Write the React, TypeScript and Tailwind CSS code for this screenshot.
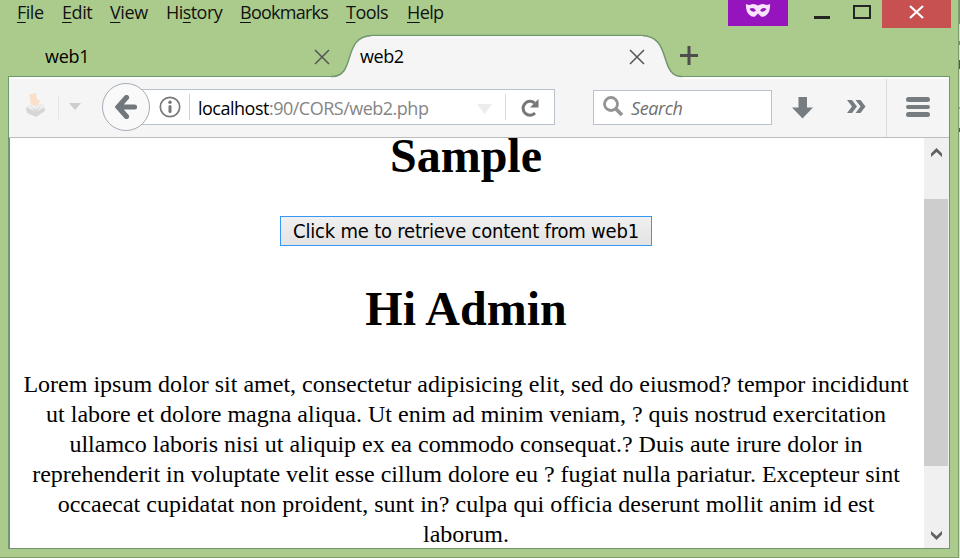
import React from "react";

const menuItems = [
  { pre: "", key: "F", post: "ile", box: "w-[45px] tracking-[-0.5px]" },
  { pre: "", key: "E", post: "dit", box: "w-[48px] tracking-[-0.4px]" },
  { pre: "", key: "V", post: "iew", box: "w-[56px] tracking-[-0.4px]" },
  { pre: "Hi", key: "s", post: "tory", box: "w-[74px] tracking-[-0.55px]" },
  { pre: "", key: "B", post: "ookmarks", box: "w-[106px] tracking-[-0.75px]" },
  { pre: "", key: "T", post: "ools", box: "w-[61px] tracking-[-0.5px]" },
  { pre: "", key: "H", post: "elp", box: "w-[60px] tracking-[-0.6px]" },
];

const paragraph = [
  "Lorem ipsum dolor sit amet, consectetur adipisicing elit, sed do eiusmod? tempor incididunt",
  "ut labore et dolore magna aliqua. Ut enim ad minim veniam, ? quis nostrud exercitation",
  "ullamco laboris nisi ut aliquip ex ea commodo consequat.? Duis aute irure dolor in",
  "reprehenderit in voluptate velit esse cillum dolore eu ? fugiat nulla pariatur. Excepteur sint",
  "occaecat cupidatat non proident, sunt in? culpa qui officia deserunt mollit anim id est",
  "laborum.",
];

function CloseX({ className }: { className: string }) {
  return (
    <svg className={className} width="16" height="16" viewBox="0 0 16 16">
      <path d="M1 1L15 15M15 1L1 15" stroke="#555" strokeWidth="1.5" fill="none" />
    </svg>
  );
}

function MenuBar() {
  return (
    <div className="flex h-[34px] items-start pl-[17px]">
      <nav className="flex h-7 text-[18px] leading-[24px] text-[#111]">
        {menuItems.map((m) => (
          <span key={m.key} className={m.box}>
            {m.pre}
            <span className="underline decoration-1 underline-offset-[3px]">{m.key}</span>
            {m.post}
          </span>
        ))}
      </nav>
      <div className="ml-auto flex">
        <div className="flex h-[26px] w-[60px] justify-center bg-[#9614bd] pt-[3px]">
          <svg width="26" height="15" viewBox="0 0 26 15">
            <path
              fillRule="evenodd"
              fill="#f7e3fb"
              d="M1 1Q4 2.500 6 1.500Q9 0 13 2.500Q17 0 20 1.500Q22 2.500 25 1Q25.500 8 22 11.500Q19 14.500 16 13.500L13 10.500L10 13.500Q7 14.500 4 11.500Q.5 8 1 1ZM4.500 6Q8 3.500 11 7.500Q7.500 10.500 4.500 6ZM21.500 6Q18 3.500 15 7.500Q18.500 10.500 21.500 6Z"
            />
          </svg>
        </div>
        <div className="mt-4 ml-[26px] h-[3px] w-4 bg-[#252525]" />
        <div className="mt-[5px] ml-[23px] h-[14px] w-[18px] border-2 border-[#252525]" />
        <div className="ml-[11px] flex h-7 w-[69px] justify-center bg-[#c75050] pt-[5px]">
          <svg width="15" height="14" viewBox="0 0 15 14">
            <path d="M1 1L14 13M14 1L1 13" stroke="#fff" strokeWidth="2.200" />
          </svg>
        </div>
        <div className="w-[7px]" />
      </div>
    </div>
  );
}

function TabStrip() {
  return (
    <div className="relative z-10 flex h-[42px] pl-[45px] text-[18px] text-black">
      <div className="flex w-[286px] pt-[10px]">
        <span className="w-[269px] leading-6 tracking-[-0.3px]">web1</span>
        <CloseX className="mt-[5px] shrink-0" />
      </div>
      <div className="relative h-[46px] w-[352px] shrink-0">
        <svg className="absolute top-0 left-0" width="352" height="46" viewBox="0 0 352 46">
          <path d="M0 46V43H1C26 43 10 1.500 42 1.500H310C342 1.500 327 43 351 43H352V46Z" fill="#f5f5f5" />
          <path d="M0 42.500H1C26 42.500 10 1.500 42 1.500H310C342 1.500 327 42.500 351 42.500" fill="none" stroke="#72966f" strokeWidth="1.500" />
          <path d="M40 2.800H312" stroke="#fff" strokeWidth="1" />
        </svg>
        <div className="relative flex pt-[10px] pl-[29px]">
          <span className="w-[269px] leading-6 tracking-[-0.4px]">web2</span>
          <CloseX className="mt-[5px] shrink-0" />
        </div>
      </div>
      <svg className="mt-[12px] ml-[-3px]" width="18" height="19" viewBox="0 0 18 19">
        <path d="M0 9.500H18M9 0V19" stroke="#4d4d4d" strokeWidth="3" />
      </svg>
    </div>
  );
}

function Toolbar() {
  return (
    <div className="flex h-[61px] border-b border-[#bcbcbc] bg-[#f5f5f5] shadow-[inset_0_2px_0_#fcfcfc]">
      <svg className="mt-[16px] ml-[16px]" width="22" height="26" viewBox="0 0 22 26">
        <path d="M1 15L7 10L19 12L20 18L11 24L2 20Z" fill="#d6d6d6" />
        <path d="M1 14L7 10L19 12L20 14L11 19Z" fill="#eee" />
        <path d="M6 14L11 17L16 13L11 19Z" fill="#d0d0d0" />
        <path d="M4 1.500L11 0L12 7L15.500 7L11.500 14L4 9L6 8Z" fill="#fadfc9" />
      </svg>
      <div className="mt-[18px] ml-[11px] h-6 w-px bg-[#e5e5e5]" />
      <svg className="mt-[26px] ml-[10px]" width="12" height="7">
        <path d="M0 0H12L6 7Z" fill="#cdcdcd" />
      </svg>
      <div className="z-10 mt-[6px] ml-[21px] flex h-12 w-12 shrink-0 items-center justify-center rounded-full border border-[#a4adb7] bg-[#f9f9f9]">
        <svg width="22" height="24" viewBox="0 0 22 24">
          <path d="M11.500 2.500L3 12L11.500 21.500M4 12H19.500" fill="none" stroke="#72777b" strokeWidth="5.200" strokeLinejoin="miter" strokeLinecap="round" />
        </svg>
      </div>
      <div className="mt-[12px] ml-[-10px] flex h-9 w-[415px] shrink-0 border border-[#b9c1ce] bg-white">
        <svg className="mt-[6px] ml-[18px]" width="22" height="22" viewBox="0 0 22 22">
          <circle cx="11" cy="11" r="9.700" fill="none" stroke="#7a7a7a" strokeWidth="1.700" />
          <circle cx="11" cy="6.200" r="1.700" fill="#777" />
          <path d="M11 10.500V15.500" stroke="#777" strokeWidth="3" strokeLinecap="round" />
        </svg>
        <div className="mt-[4px] ml-[8px] h-[26px] w-px bg-[#d2d2d2]" />
        <div className="mt-[6px] ml-[8px] w-[279px] text-[18px] leading-6 tracking-[-0.5px] text-[#858585]">
          <span className="text-black">localhost</span>:90/CORS/web2.php
        </div>
        <svg className="mt-[14px] shrink-0" width="15" height="10">
          <path d="M0 0H15L7.500 10Z" fill="#ececec" />
        </svg>
        <div className="mt-[4px] ml-[13px] h-[26px] w-px shrink-0 bg-[#d8dce2]" />
        <svg className="mt-[8px] ml-[15px] shrink-0" width="19" height="20" viewBox="0 0 19 20">
          <path d="M14 15A6.900 6.900 0 1 1 13.500 5" fill="none" stroke="#777" strokeWidth="3" />
          <path d="M17.500 1V9.500H9Z" fill="#777" />
        </svg>
      </div>
      <div className="mt-[13px] ml-[38px] flex h-[35px] w-[179px] shrink-0 border border-[#b9c1ce] bg-white">
        <svg className="mt-[5px] ml-[9px]" width="21" height="22" viewBox="0 0 21 22">
          <circle cx="8" cy="8" r="6.500" fill="none" stroke="#949494" strokeWidth="2.800" />
          <path d="M12.500 12.500L19 19" stroke="#949494" strokeWidth="3.800" />
        </svg>
        <span className="mt-[5px] ml-[7px] text-[18px] leading-6 tracking-[-0.4px] text-[#707070] italic">Search</span>
      </div>
      <svg className="mt-[20px] ml-[20px] shrink-0" width="21" height="22">
        <path d="M6.500 0H15V10.500H21L10.500 21.500L0 10.500H6.500Z" fill="#777c80" />
      </svg>
      <svg className="mt-[23px] ml-[34px] shrink-0" width="19" height="14" viewBox="0 0 19 14">
        <path d="M0 0H5L10 6.500L5 13H0L5 6.500ZM8.500 0H13.500L18.500 6.500L13.500 13H8.500L13.500 6.500Z" fill="#777c80" />
      </svg>
      <div className="mt-[2px] ml-[20px] h-[58px] w-px bg-[#dedede]" />
      <div className="mt-[20px] ml-[19px] flex w-6 flex-col gap-[3px]">
        <div className="h-[4.500px] rounded-full bg-[#777c80]" />
        <div className="h-[4.500px] rounded-full bg-[#777c80]" />
        <div className="h-[4.500px] rounded-full bg-[#777c80]" />
      </div>
    </div>
  );
}

function ScrollBar() {
  return (
    <div className="flex w-[25px] shrink-0 flex-col bg-[#f0f0f0]">
      <svg className="mt-[10px] ml-[7px]" width="11" height="9" viewBox="0 0 11 9">
        <path d="M5.500 0L11 5.500V9L5.500 4L0 9V5.500Z" fill="#606060" />
      </svg>
      <div className="mt-[42px] h-[267px] w-6 bg-[#cdcdcd]" />
      <svg className="mt-[65px] ml-[7px]" width="11" height="9" viewBox="0 0 11 9">
        <path d="M5.500 9L11 3.500V0L5.500 5L0 0V3.500Z" fill="#606060" />
      </svg>
    </div>
  );
}

function Page() {
  return (
    <div className="flex h-[410px] border-l border-[#72966f] bg-white">
      <main className="flex w-[914px] shrink-0 flex-col items-center overflow-hidden pr-[2px] font-['Liberation_Serif',serif] text-black">
        <h1 className="h-9 text-[48px] leading-9 font-bold">Sample</h1>
        <button className="mt-[42px] h-[30px] w-[372px] shrink-0 border border-[#3399f5] bg-linear-to-b from-[#f0f0f0] to-[#e3e3e3] text-center font-['DejaVu_Sans_Condensed','DejaVu_Sans',sans-serif] text-[20px] leading-[29px] tracking-[-0.2px] whitespace-nowrap">
          Click me to retrieve content from web1
        </button>
        <h1 className="mt-[36px] h-[54px] text-[48px] leading-[54px] font-bold">Hi Admin</h1>
        <div className="mt-[33px] text-center text-[24px] leading-[30px] whitespace-nowrap">
          {paragraph.map((line) => (
            <div key={line}>{line}</div>
          ))}
        </div>
      </main>
      <ScrollBar />
    </div>
  );
}

export default function App() {
  return (
    <div className="flex h-[558px] w-[960px] overflow-hidden font-['Open_Sans','Noto_Sans',sans-serif]">
      <div className="h-[558px] w-[959px] shrink-0 border-r border-b border-[#809b6c] bg-[#abcb8c]">
        <MenuBar />
        <TabStrip />
        <div className="ml-[8px] h-[473px] w-[942px] border border-[#72966f]">
          <Toolbar />
          <Page />
        </div>
      </div>
      <div className="flex w-px flex-col bg-[#deded8]">
        <div className="h-6 bg-[#888]" />
        <div className="mt-[17px] h-1 bg-[#b77d22]" />
        <div className="mt-[15px] h-[9px] bg-[#805011]" />
        <div className="mt-[38px] h-[2px] bg-[#d59c54]" />
        <div className="mt-[19px] h-1 bg-[#805011]" />
      </div>
    </div>
  );
}
